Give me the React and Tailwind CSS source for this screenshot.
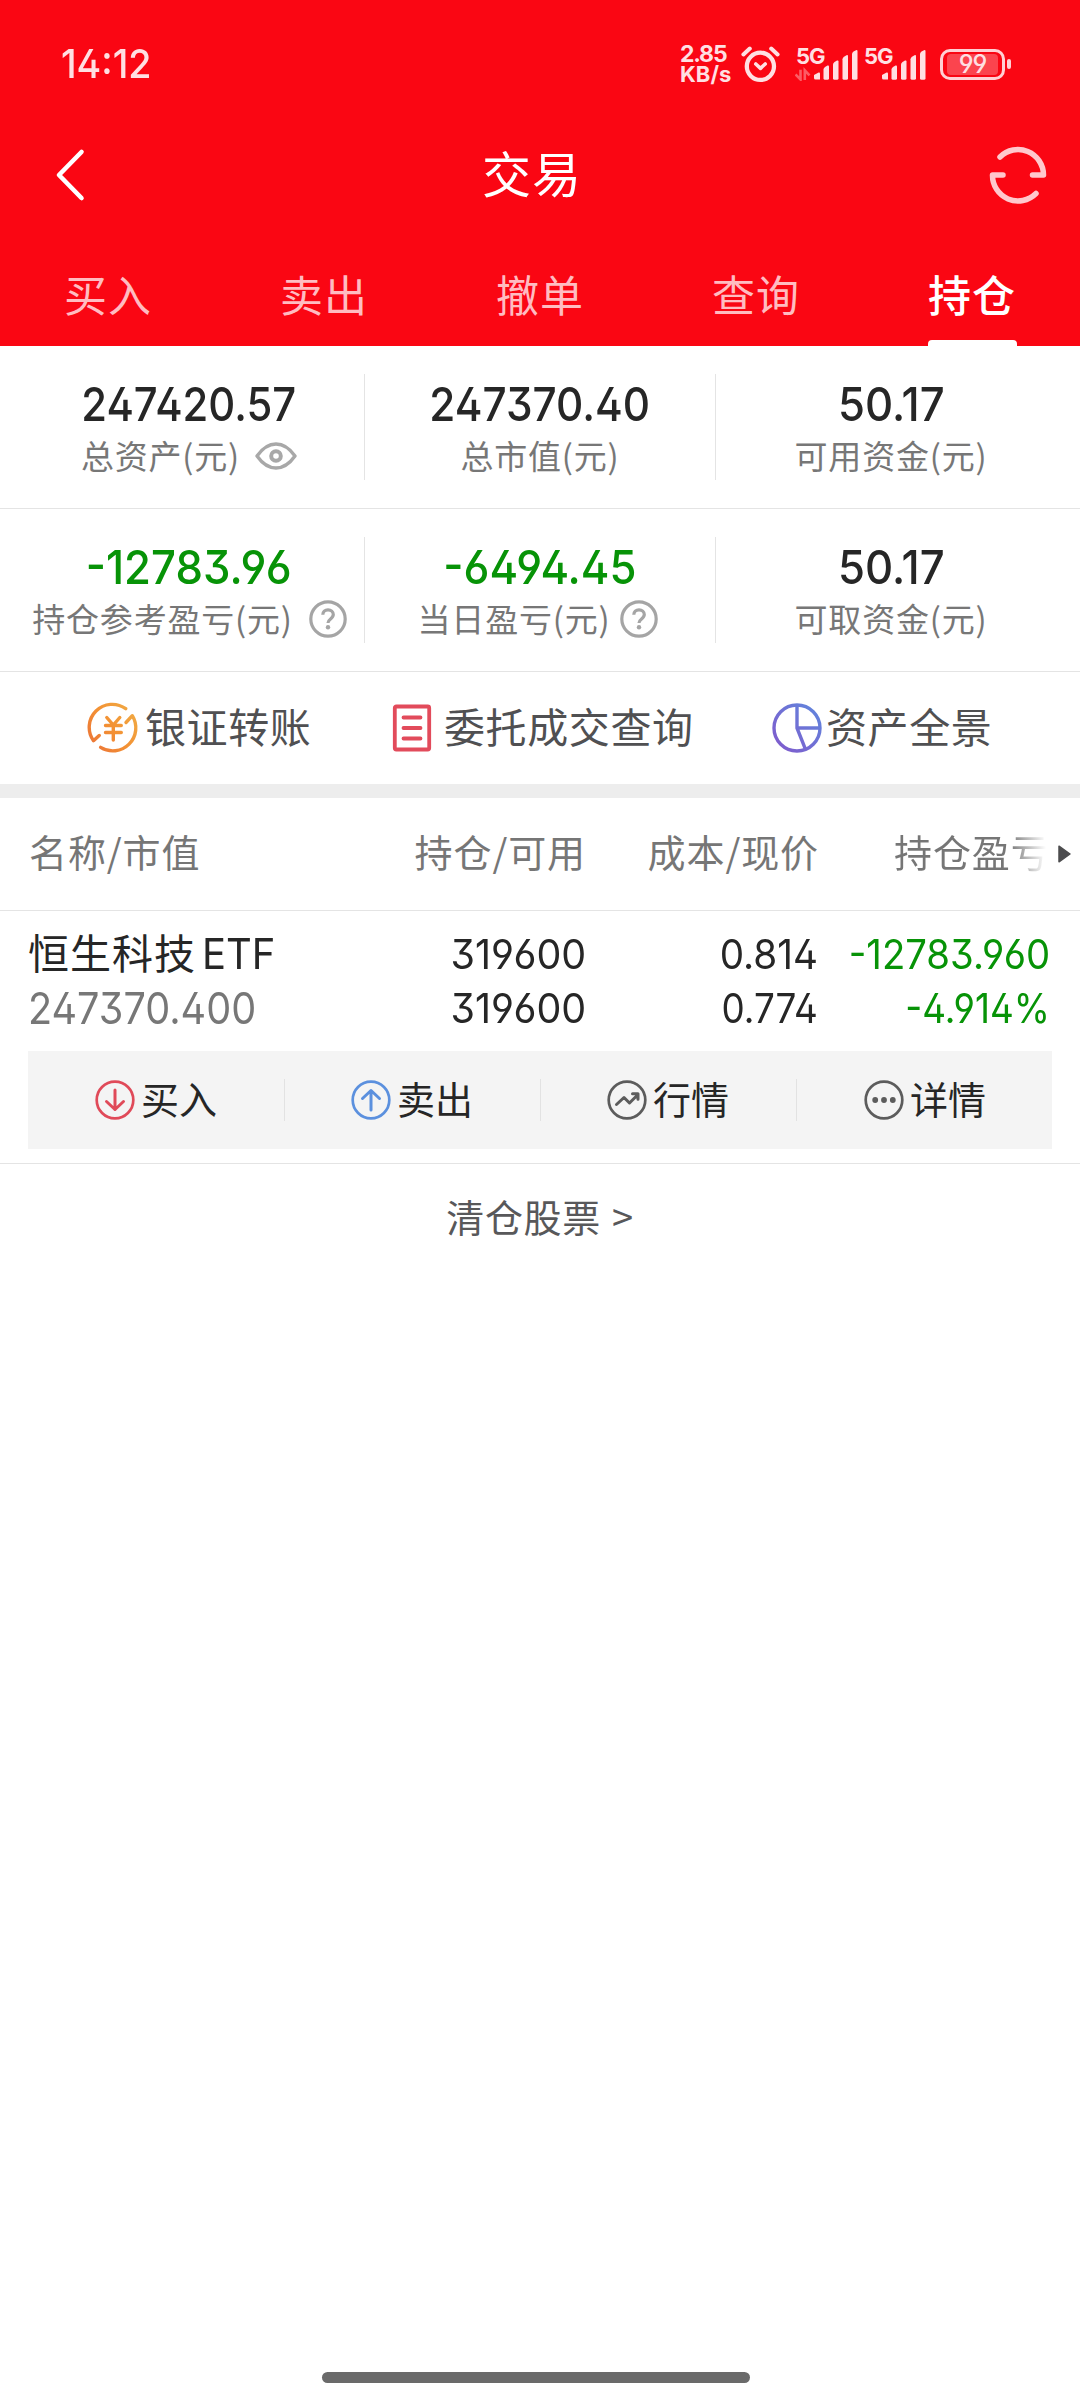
import React from 'react';

const CJK = "font-['Noto_Sans_CJK_SC',sans-serif]";
const NUM = "font-['Inter',sans-serif] [font-feature-settings:'ss01']";

function AlarmIcon() {
  return (
    <svg className="ml-[6px] h-[38px] w-[41px]" viewBox="0 0 41 38" fill="none" stroke="#ffdfe2" strokeLinecap="round" strokeLinejoin="round">
      <circle cx="20.4" cy="21.3" r="13.6" strokeWidth="4.3" />
      <path d="M15.8 19l4.7 4.3 4.7-4.3" strokeWidth="3.6" />
      <path d="M3.4 9.4l6.4-5.8M37.6 9.4l-6.4-5.8" strokeWidth="4" />
    </svg>
  );
}

function Signal({ transfer }) {
  return (
    <div className="relative h-[34px] w-[63px]">
      <span className={`absolute -top-[2px] left-[1px] text-[22px] leading-[22px] font-bold tracking-[-1px] ${NUM}`}>5G</span>
      <svg className="h-[34px] w-[63px]" viewBox="0 0 63 34" fill="#ffdfe2">
        <path d="M19 28.100l4.600-2.500q1.400-.4 1.400 1v6h-4.500q-1.500 0-1.500-1.500z" />
        <path d="M28.500 22.500q0-1.500 1.500-2.500l2.500-1.500q1.500-.5 1.500 1v11.700q0 1.500-1.500 1.500h-2.500q-1.500 0-1.500-1.500z" />
        <path d="M38 17.500q0-1.500 1.500-2.500l2.500-1.500q1.500-.5 1.500 1v16.700q0 1.500-1.500 1.500h-2.500q-1.500 0-1.500-1.500z" />
        <path d="M47.500 12.200q0-1.500 1.500-2.500l2.500-1.500q1.500-.5 1.500 1v22q0 1.500-1.500 1.500h-2.500q-1.500 0-1.500-1.500z" />
        <path d="M57 7q0-1.500 1.500-2.500l2.500-1.300q1.500-.5 1.500 1v27q0 1.500-1.500 1.500h-2.500q-1.500 0-1.500-1.500z" />
        {transfer && (
          <path d="M5.500 22.800v9.700l-5-5M9.800 33v-9.700l4.700 5" fill="none" stroke="#ffdfe2" strokeWidth="2.600" opacity=".4" />
        )}
      </svg>
    </div>
  );
}

function Battery() {
  return (
    <div className="ml-[14px] flex items-center gap-[2px]">
      <div className="flex h-[31px] w-[65px] items-center justify-center rounded-[10px] border-[3.500px] border-[#ffd0d4] p-[3px]">
        <div className="flex h-[21px] w-[51px] items-center justify-center rounded-[4px] bg-white/25">
          <span className={`text-[25px] leading-[21px] font-medium tracking-[-1px] ${NUM}`}>99</span>
        </div>
      </div>
      <div className="h-[10px] w-[4px] rounded-[2px] bg-[#ffd0d4]" />
    </div>
  );
}

function BackIcon() {
  return (
    <svg className="h-[56px] w-[32px]" viewBox="0 0 32 56" fill="none" stroke="#fff" strokeWidth="4.600" strokeLinecap="round" strokeLinejoin="round">
      <path d="M27.500 5L5 28l22.500 23" />
    </svg>
  );
}

function RefreshIcon() {
  return (
    <svg className="h-[60px] w-[60px]" viewBox="0 0 60 60" fill="none" stroke="#ffc8cd" strokeWidth="5.500" strokeLinecap="round" strokeLinejoin="round">
      <path d="M12 12A25.500 25.500 0 0 1 55.500 30H44.500" />
      <path d="M48 48.500A25.500 25.500 0 0 1 4.500 30H15" />
    </svg>
  );
}

function EyeIcon() {
  return (
    <svg className="h-[28px] w-[42px]" viewBox="0 0 42 28" fill="none" stroke="#a8a8a8" strokeWidth="3.400">
      <path d="M2 14C8 5.500 14 2 21 2s13 3.500 19 12c-6 8.500-12 12-19 12S8 22.500 2 14z" strokeLinejoin="round" />
      <circle cx="21" cy="14" r="4.800" strokeWidth="4" />
    </svg>
  );
}

function HelpIcon() {
  return (
    <svg className="h-[38px] w-[38px]" viewBox="0 0 38 38" fill="none" stroke="#a5a5a5" strokeWidth="3.200">
      <circle cx="19" cy="19" r="17.200" />
      <path d="M13.800 14.800c0-2.800 2.200-5 5.200-5s5.300 2 5.300 4.800c0 2.300-1.400 3.400-3 4.600-1.600 1.200-2.300 2-2.300 3.800" />
      <circle cx="19" cy="27.300" r="2.200" fill="#a5a5a5" stroke="none" />
    </svg>
  );
}

function TransferIcon() {
  return (
    <svg className="h-[52px] w-[52px]" viewBox="0 0 52 52" fill="none" stroke="url(#orange)" strokeWidth="3.400" strokeLinecap="round" strokeLinejoin="round">
      <defs>
        <linearGradient id="orange" gradientUnits="userSpaceOnUse" x1="0" y1="48" x2="52" y2="8">
          <stop offset="0" stopColor="#ea7038" />
          <stop offset=".5" stopColor="#f39134" />
          <stop offset="1" stopColor="#f0ac45" />
        </linearGradient>
      </defs>
      <path d="M38.700 6.700A23 23 0 0 0 6.500 38.700L12.200 33.500" />
      <path d="M13.600 45.400A23 23 0 0 0 45.300 13.700L39 20.500" />
      <path d="M19.800 15.500l6.500 7.500 6.500-7.500M18.500 23.500h15.800M18.500 30.500h15.800M26.300 23v15" />
    </svg>
  );
}

function OrdersIcon() {
  return (
    <svg className="h-[48px] w-[40px]" viewBox="0 0 40 48" fill="none" stroke="#e24b5b" strokeWidth="3.800" strokeLinecap="round" strokeLinejoin="round">
      <rect x="2.800" y="2.500" width="34.400" height="43" rx="1.500" />
      <path d="M11.500 13.500h17M11.500 24h17M11.500 34.500h17" />
    </svg>
  );
}

function PieIcon() {
  return (
    <svg className="h-[52px] w-[52px]" viewBox="0 0 52 52" fill="none" stroke="url(#violet)" strokeWidth="3.400">
      <defs>
        <linearGradient id="violet" gradientUnits="userSpaceOnUse" x1="6" y1="46" x2="46" y2="6">
          <stop offset="0" stopColor="#7f5ccd" />
          <stop offset="1" stopColor="#6284dc" />
        </linearGradient>
      </defs>
      <circle cx="26" cy="26" r="23" />
      <path d="M26 3v23l8.300 20.800M26 26h23" strokeLinejoin="round" />
    </svg>
  );
}

function RoundIcon({ color, children }) {
  return (
    <svg className="h-[40px] w-[40px]" viewBox="0 0 40 40" fill="none" stroke={color} strokeWidth="3" strokeLinecap="round" strokeLinejoin="round">
      <circle cx="20" cy="20" r="18.300" strokeWidth="2.700" />
      {children}
    </svg>
  );
}

function Metric({ value, label, icon, valueClass, labelClass = '' }) {
  return (
    <div className="pt-[34px] text-center">
      <div className="flex justify-center">
        <span className={`inline-block text-[47px] leading-[48px] font-[450] ${NUM} ${valueClass}`}>{value}</span>
      </div>
      <div className={`mt-[3px] flex h-[48px] items-center justify-center ${labelClass}`}>
        <span className={`text-[33px] leading-[48px] tracking-[0.8px] whitespace-nowrap text-[#777] ${CJK}`}>{label}</span>
        {icon}
      </div>
    </div>
  );
}

function MetricRow({ children }) {
  const [a, b, c] = children;
  return (
    <div className="flex h-[163px] border-b border-[#e4e4e4]">
      <div className="w-[364px] pl-[14px]">{a}</div>
      <div className="mt-[28px] h-[106px] w-px bg-[#e4e4e4]" />
      <div className="w-[350px]">{b}</div>
      <div className="mt-[28px] h-[106px] w-px bg-[#e4e4e4]" />
      <div className="flex-1 pr-[14px]">{c}</div>
    </div>
  );
}

const tabs = ['买入', '卖出', '撤单', '查询', '持仓'];

export default function App() {
  const action = `text-[41px] leading-[56px] tracking-[0.6px] text-[#505052] ${CJK}`;
  const head = `text-[38px] leading-[56px] tracking-[0.9px] whitespace-nowrap text-[#767676] ${CJK}`;
  const num = `inline-block text-[40.5px] leading-[48px] ${NUM}`;
  const op = `-mt-[4px] ml-[6px] text-[38px] leading-[56px] text-[#262626] ${CJK}`;
  return (
    <div className="flex h-[2400px] w-[1080px] flex-col overflow-hidden bg-white">
      <header className="flex h-[346px] flex-col bg-[#fa0613] text-white">
        <div className="flex h-[122px] items-center justify-between pt-[6px] pl-[61px] text-[#ffdfe2]">
          <span className={`inline-block origin-left scale-x-[0.94] text-[40px] leading-[48px] font-medium ${NUM}`}>14:12</span>
          <div className="mr-[69px] flex items-center">
            <div className={`w-[54px] font-bold ${NUM}`}>
              <div className="text-[23px] leading-[20px] tracking-[-1.2px]">2.85</div>
              <div className="text-[22px] leading-[20px] tracking-normal">KB/s</div>
            </div>
            <AlarmIcon />
            <div className="ml-[14px] flex gap-[5px]">
              <Signal transfer />
              <Signal />
            </div>
            <Battery />
          </div>
        </div>
        <div className="flex h-[106px] items-center pr-[32px] pl-[54px]">
          <BackIcon />
          <h1 className={`-mt-[7px] mr-auto ml-[396px] text-[49px] leading-[64px] tracking-[1px] ${CJK}`}>交易</h1>
          <RefreshIcon />
        </div>
        <nav className="grid h-[118px] grid-cols-5">
          {tabs.map((t, i) => (
            <div key={t} className="flex flex-col items-center justify-between pt-[35px]">
              <span className={`text-[43px] leading-[60px] tracking-[1px] ${CJK} ${i === 4 ? 'font-medium text-white' : 'text-[#ffbcc1]'}`}>{t}</span>
              {i === 4 && <div className="h-[6px] w-[89px] rounded-t-[4px] bg-white" />}
            </div>
          ))}
        </nav>
      </header>

      <section>
        <MetricRow>
          <Metric value="247420.57" label="总资产(元)" valueClass="scale-x-[0.89] text-[#262626]" icon={<span className="mt-[2px] ml-[15px]"><EyeIcon /></span>} />
          <Metric value="247370.40" label="总市值(元)" valueClass="scale-x-[0.9] text-[#262626]" />
          <Metric value="50.17" label="可用资金(元)" valueClass="scale-x-[0.93] text-[#262626]" />
        </MetricRow>
        <MetricRow>
          <Metric value="-12783.96" label="持仓参考盈亏(元)" valueClass="scale-x-[0.93] text-[#079307]" labelClass="ml-[1px]" icon={<span className="mt-[2px] ml-[16px]"><HelpIcon /></span>} />
          <Metric value="-6494.45" label="当日盈亏(元)" valueClass="scale-x-[0.93] text-[#079307]" labelClass="-ml-[4px]" icon={<span className="mt-[2px] ml-[10px]"><HelpIcon /></span>} />
          <Metric value="50.17" label="可取资金(元)" valueClass="scale-x-[0.93] text-[#262626]" />
        </MetricRow>
      </section>

      <section className="flex h-[112px] items-center pl-[87px]">
        <div className="flex w-[305px] items-center"><TransferIcon /><span className={`-mt-[6px] ml-[6px] ${action}`}>银证转账</span></div>
        <div className="flex w-[379px] items-center"><OrdersIcon /><span className={`-mt-[6px] ml-[12px] ${action}`}>委托成交查询</span></div>
        <div className="flex items-center"><PieIcon /><span className={`-mt-[6px] ml-[3px] ${action}`}>资产全景</span></div>
      </section>
      <div className="h-[14px] bg-[#ededed]" />

      <div className="flex h-[113px] items-center border-b border-[#e4e4e4] pb-[6px] pl-[29px]">
        <span className={`w-[254px] ${head}`}>名称/市值</span>
        <span className={`w-[303px] text-right ${head}`}>持仓/可用</span>
        <span className={`w-[233px] text-right ${head}`}>成本/现价</span>
        <span className={`ml-[75px] w-[160px] bg-[linear-gradient(to_right,#767676_115px,#ffffff_152px)] bg-clip-text text-[38px] leading-[56px] tracking-[0.9px] whitespace-nowrap text-transparent ${CJK}`}>持仓盈亏</span>
        <svg className="mt-[5px] ml-[4px] h-[18px] w-[13px]" viewBox="0 0 13 18" fill="#4c4c4e" stroke="#4c4c4e" strokeWidth="1.500" strokeLinejoin="round">
          <path d="M1 1.200v15.600L12 9z" />
        </svg>
      </div>

      <section className="h-[253px] border-b border-[#e4e4e4] px-[28px] pt-[12px]">
        <div className="flex h-[128px] pt-[3px]">
          <div className="w-[255px]">
            <div className="flex h-[54px] items-baseline text-[#262626]">
              <span className={`text-[41px] leading-[50px] tracking-[1px] whitespace-nowrap ${CJK}`}>恒生科技</span>
              <span className={`ml-[6px] inline-block origin-left scale-x-[0.93] text-[43px] leading-[50px] ${NUM}`}>ETF</span>
            </div>
            <div className={`mt-px inline-block origin-left scale-x-[0.9] text-[44px] leading-[54px] text-[#777] ${NUM}`}>247370.400</div>
          </div>
          <div className="flex w-[303px] flex-col items-end gap-[6px] pt-[5px] text-[#262626]">
            <span className={`origin-right scale-x-[0.975] ${num}`}>319600</span>
            <span className={`origin-right scale-x-[0.975] ${num}`}>319600</span>
          </div>
          <div className="flex w-[232px] flex-col items-end gap-[6px] pt-[5px] text-[#262626]">
            <span className={`origin-right scale-x-[0.955] ${num}`}>0.814</span>
            <span className={`origin-right scale-x-[0.91] ${num}`}>0.774</span>
          </div>
          <div className="flex w-[232px] flex-col items-end gap-[6px] pt-[5px] whitespace-nowrap text-[#079307]">
            <span className={`origin-right scale-x-[0.945] ${num}`}>-12783.960</span>
            <span className={`origin-right scale-x-[0.91] ${num}`}>-4.914%</span>
          </div>
        </div>
        <div className="grid h-[98px] grid-cols-4 bg-[#f4f4f4]">
          <div className="flex items-center justify-center">
            <RoundIcon color="#e04a59"><path d="M20 10v19.500M11.500 21.500L20 29.500l8.500-8" /></RoundIcon>
            <span className={op}>买入</span>
          </div>
          <div className="relative flex items-center justify-center">
            <div className="absolute left-0 h-[42px] w-px bg-[#e2e2e2]" />
            <RoundIcon color="#5b90de"><path d="M20 30V10.500M11.500 18.500L20 10.500l8.500 8" /></RoundIcon>
            <span className={op}>卖出</span>
          </div>
          <div className="relative flex items-center justify-center">
            <div className="absolute left-0 h-[42px] w-px bg-[#e2e2e2]" />
            <RoundIcon color="#5c5c5c"><path d="M9.500 24.500l7.500-7 5.500 5.500 8-8M25.500 13.800h5.500v5.500" /></RoundIcon>
            <span className={op}>行情</span>
          </div>
          <div className="relative flex items-center justify-center pl-[2px]">
            <div className="absolute left-0 h-[42px] w-px bg-[#e2e2e2]" />
            <RoundIcon color="#5c5c5c"><path d="M11.200 20h.01M20 20h.01M28.800 20h.01" strokeWidth="5.800" /></RoundIcon>
            <span className={op}>详情</span>
          </div>
        </div>
      </section>

      <div className={`mt-[24px] flex justify-center text-[38px] leading-[56px] tracking-[0.7px] text-[#58585a] ${CJK}`}>
        <span>清仓股票</span>
        <span className="ml-[11px]">&gt;</span>
      </div>

      <div className="mt-auto mb-[17px] ml-[322px] h-[11px] w-[428px] rounded-full bg-[#6a6a6a]" />
    </div>
  );
}
